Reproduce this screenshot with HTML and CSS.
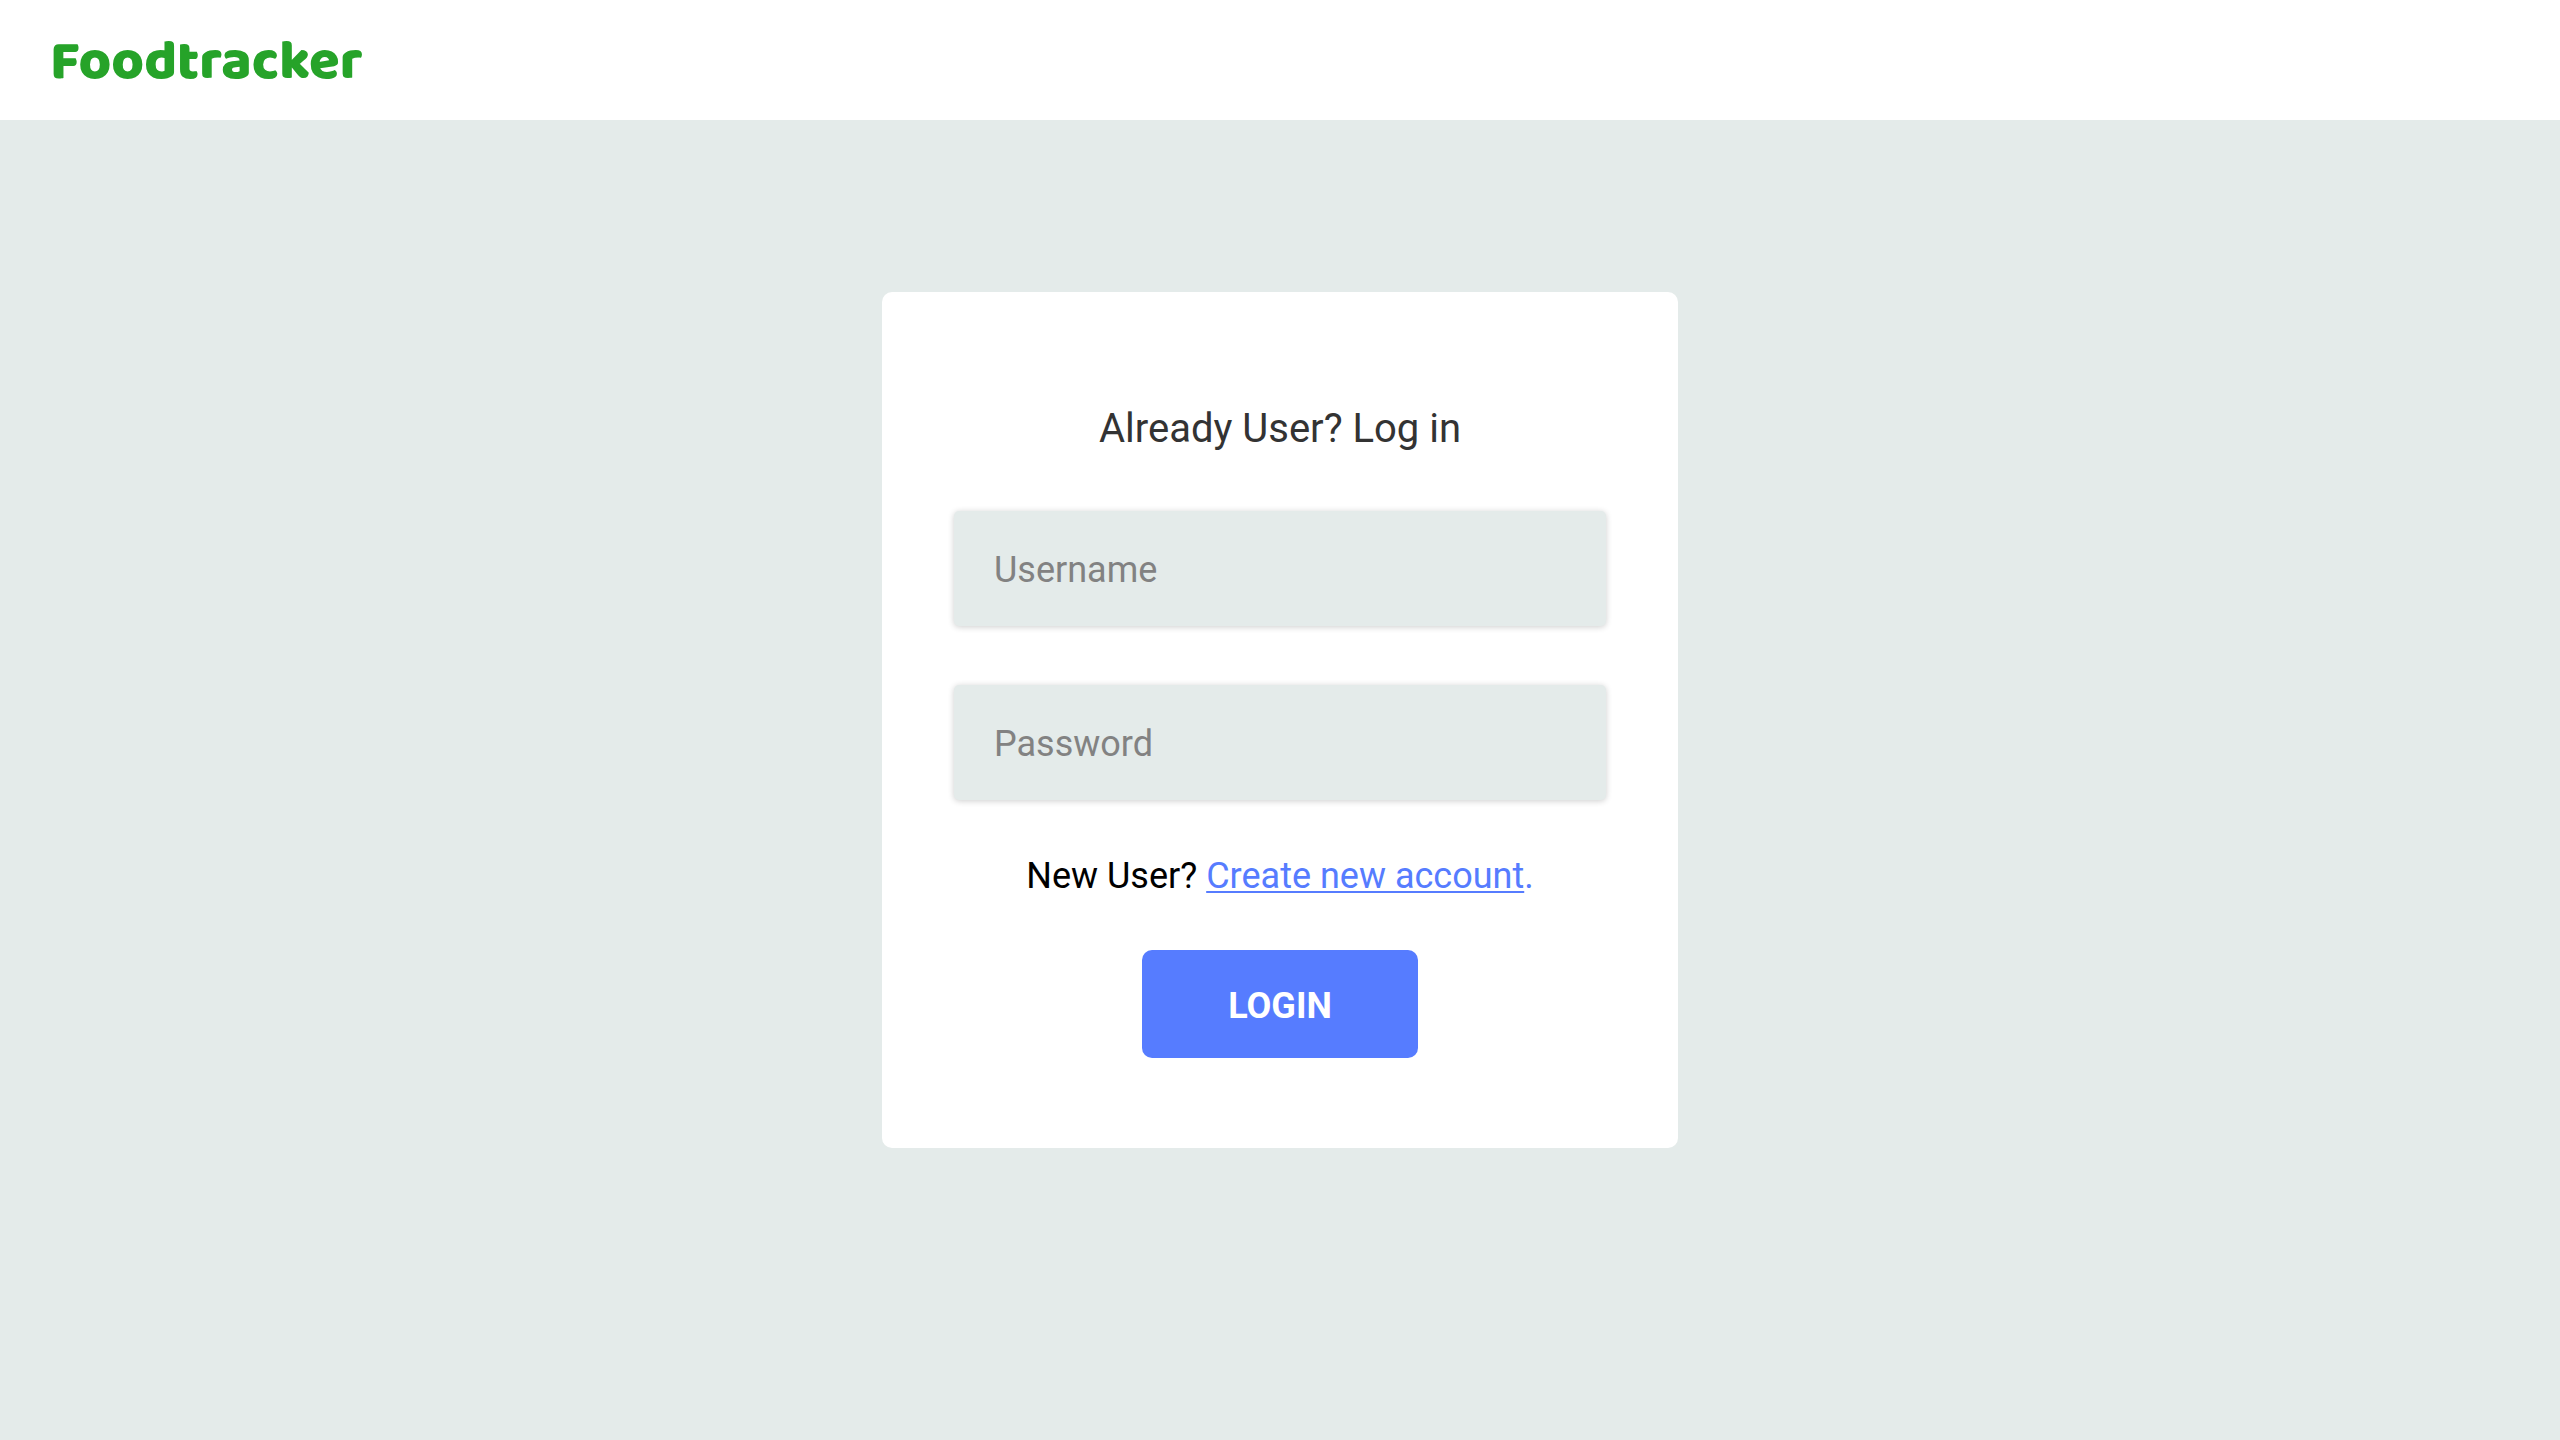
FILE: index.html
```html
<!DOCTYPE html>
<html lang="en">
<head>
  <meta charset="utf-8">
  <meta name="viewport" content="width=device-width, initial-scale=1">
  <title>Foodtracker</title>
  <link rel="stylesheet" href="styles.css">
</head>
<body>
  <header class="site-header">
    <a class="brand" href="#">Foodtracker</a>
  </header>
  <main class="page">
    <form class="card">
      <h1 class="card-title">Already User? Log in</h1>
      <input class="field" type="text" name="username" placeholder="Username" aria-label="Username" autocomplete="username">
      <input class="field" type="password" name="password" placeholder="Password" aria-label="Password" autocomplete="current-password">
      <p class="signup">New User? <a class="signup-link" href="#">Create new account</a><span class="signup-stop">.</span></p>
      <button class="login-button" type="submit">LOGIN</button>
    </form>
  </main>
</body>
</html>
```
FILE: styles.css
```css
* {
  box-sizing: border-box;
}

body {
  margin: 0;
  min-height: 100vh;
  background: #e4ebea;
  font-family: Roboto, "Liberation Sans", sans-serif;
}

.site-header {
  display: flex;
  align-items: center;
  height: 120px;
  padding: 6px 50px 0;
  background: #fff;
}

.brand {
  color: #26a329;
  font-family: "Baloo 2", Baloo, Lato, sans-serif;
  font-size: 56px;
  font-weight: 900;
  line-height: 64px;
  text-decoration: none;
}

.page {
  display: flex;
  justify-content: center;
  padding: 172px 24px 24px;
}

.card {
  display: flex;
  flex-direction: column;
  align-items: center;
  width: 100%;
  max-width: 796px;
  padding: 113px 72px 90px;
  background: #fff;
  border-radius: 10px;
}

.card-title {
  margin: 0 0 58px;
  color: #333;
  font-size: 40px;
  font-weight: 400;
  line-height: 48px;
}

.field {
  width: 100%;
  height: 115px;
  margin: 0 0 59px;
  padding: 2px 40px 0;
  border: 0;
  border-radius: 5px;
  background: #e4ebea;
  box-shadow: 0 1px 6px rgba(0, 0, 0, 0.2);
  color: #333;
  font: 400 36px/44px Roboto, "Liberation Sans", sans-serif;
}

.field::placeholder {
  color: #828282;
  opacity: 1;
}

.signup {
  margin: -5px 0 52px;
  color: #000;
  font-size: 36px;
  line-height: 44px;
}

.signup-link,
.signup-stop {
  color: #567cff;
}

.signup-link {
  text-decoration-thickness: 2px;
  text-decoration-skip-ink: none;
  text-underline-offset: 3px;
}

.login-button {
  width: 276px;
  height: 108px;
  padding: 4px 0 0;
  border: 0;
  border-radius: 10px;
  background: #567cff;
  color: #fff;
  font: 700 36px/44px Roboto, "Liberation Sans", sans-serif;
  cursor: pointer;
}
```
